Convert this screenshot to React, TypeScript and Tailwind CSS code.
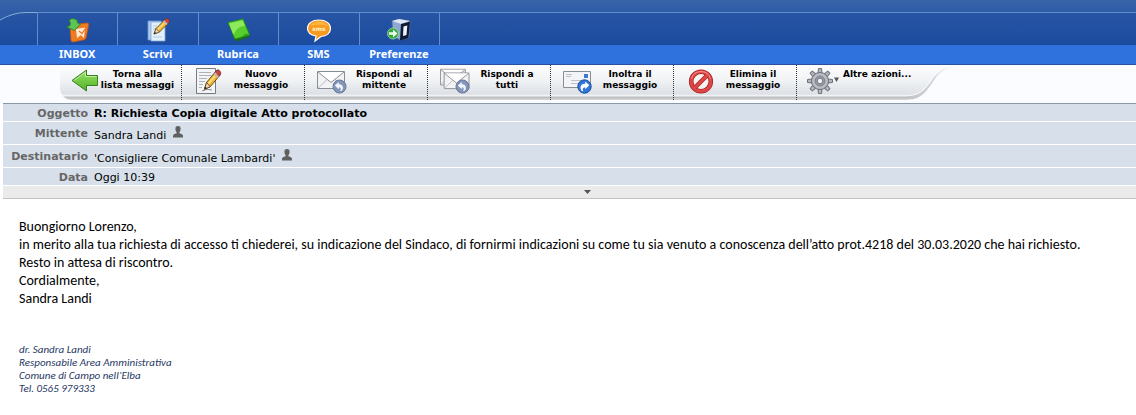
import React from "react";

function InboxIcon() {
  return (
    <svg width="26" height="26" viewBox="0 0 26 26" aria-hidden="true">
      <path d="M5 8 L22 6 Q24 6 23.600 8 L21 21 Q20.500 23 18 23 L8 25 Q6 25 6 23 Z" fill="#f07a1e" stroke="#c65a10" strokeWidth=".8" />
      <path d="M11 12 L20 10.500 L19 21 L16 18 L12 21 Z" fill="#fdebd8" />
      <path d="M14 14 L17 16.500 L20 12" fill="none" stroke="#e9772a" strokeWidth="1.200" />
      <path d="M4 3.500 Q6 .5 10 2 Q13 3 12.500 6 L15.500 7 L9.500 13.500 L1.500 10 L5 8.500 Q6 5 4 3.500 Z" fill="#5cc452" stroke="#237c2c" strokeWidth=".8" />
    </svg>
  );
}

function Pencil() {
  return (
    <g>
      <path d="M9 17 L11 11.500 L20.500 2 L24 5.500 L14.500 15 Z" fill="#f2b632" stroke="#5a3d16" strokeWidth=".8" />
      <path d="M19 3.500 L20.500 2 Q22 .6 23.600 2.300 Q25.400 4 24 5.500 L22.500 7 Z" fill="#cf4640" stroke="#6b2b2b" strokeWidth=".7" />
      <path d="M18 4.500 L19.300 3.300 L22.700 6.700 L21.500 8 Z" fill="#b8bcc4" />
      <path d="M12 12.200 L18.600 5.700 L19.700 6.800 L13 13.300 Z" fill="#ffdf85" />
      <path d="M11 11.500 L14.500 15 L9 17 Z" fill="#ecd9b5" stroke="#5a3d16" strokeWidth=".7" />
      <path d="M9 17 L9.800 14.800 L11.200 16.200 Z" fill="#222" />
    </g>
  );
}

function WriteIcon() {
  return (
    <svg width="26" height="26" viewBox="0 0 26 26" aria-hidden="true">
      <path d="M3 4 H16 V23 H3 Z" fill="#aecdf0" stroke="#6d99cf" strokeWidth=".8" />
      <path d="M6 5 H20 V24 H6 Z" fill="#e3effb" stroke="#7da7d9" strokeWidth=".8" />
      <path d="M8 9 H12 M8 12 H11 M8 20 H17" stroke="#b2c9e6" />
      <Pencil />
    </svg>
  );
}

function BookIcon() {
  return (
    <svg width="26" height="26" viewBox="0 0 26 26" aria-hidden="true">
      <path d="M3 6 L8 22 L11 24.500 L24 19.500 L18 4 Z" fill="#176c19" />
      <path d="M2 5.500 L17 2 L23.500 18 L9 22 Z" fill="#58ce2c" stroke="#269119" strokeWidth=".8" />
      <path d="M3 6.500 L16.500 3.200 L19 9 Q11 9 7.500 18 Z" fill="#8ee95c" />
      <path d="M15 20 L20 16.500 L23.500 18 Z" fill="#2c9e1c" />
    </svg>
  );
}

function SmsIcon() {
  return (
    <svg width="26" height="26" viewBox="0 0 26 26" aria-hidden="true">
      <path d="M13 3 C20 3 24.500 6.500 24.500 11.500 C24.500 16 20.500 19 15 19.500 L9 24 L10 19 C5 18 1.500 15.500 1.500 11.500 C1.500 6.500 6 3 13 3 Z" fill="#f79a1f" stroke="#fff" strokeWidth="1.200" />
      <path d="M4 9 Q7 4.500 13 4.500 Q19 4.500 22 9 Q13 6.500 4 9 Z" fill="#ffb542" />
      <text x="13" y="13.500" textAnchor="middle" fontFamily="DejaVu Sans, sans-serif" fontWeight="700" fontSize="6" fill="#fff3cf">sms</text>
    </svg>
  );
}

function PrefsIcon() {
  return (
    <svg width="26" height="26" viewBox="0 0 26 26" aria-hidden="true">
      <path d="M6 4 L13 2 L24 4 L23 21 L14 23 L7 19 Z" fill="#8fa9d3" stroke="#53688f" strokeWidth=".7" />
      <path d="M6 4 L13 2 L24 4 L15.500 7 Z" fill="#dce8f8" />
      <path d="M15 7 L24 4.500 L22.500 21 L14 23.500 Z" fill="#101c35" />
      <path d="M17.500 9.500 L21.300 8.500 L20.500 18 L17 19 Z" fill="#edf4fc" />
      <circle cx="7" cy="16.500" r="5.500" fill="#35a746" stroke="#a4dca8" strokeWidth=".8" />
      <path d="M3 15.200 H7 V12.500 L11.500 16.500 L7 20.500 V17.800 H3 Z" fill="#e9ffe6" />
    </svg>
  );
}

function BackIcon() {
  return (
    <svg width="30" height="28" viewBox="0 0 30 28" aria-hidden="true">
      <defs>
        <linearGradient id="back" x1="0" y1="0" x2="0" y2="1">
          <stop offset="0" stopColor="#9be36a" />
          <stop offset="1" stopColor="#4fb222" />
        </linearGradient>
      </defs>
      <path d="M2 13.500 L16.500 3 V8.500 H27.500 V18.500 H16.500 V24 Z" fill="url(#back)" stroke="#3b7d22" strokeLinejoin="round" />
      <path d="M4 13.500 L15.500 5.200 V9.500 H26.500" fill="none" stroke="#c8f5a8" strokeWidth=".8" />
    </svg>
  );
}

function NewIcon() {
  return (
    <svg width="30" height="28" viewBox="0 0 30 28" aria-hidden="true">
      <path d="M2.500 1.500 H21.500 V26.500 H2.500 Z" fill="#f3f4f6" stroke="#777b84" />
      <path d="M5 5.500 H17 M5 8.500 H17 M5 11.500 H13 M5 14.500 H11 M5 17.500 H9 M5 20.500 H8" stroke="#adb0b7" />
      <path d="M8 24 Q13 21 18 23" fill="none" stroke="#8a8a8a" />
      <g transform="translate(1 1) scale(1.050 1.250)">
        <Pencil />
      </g>
    </svg>
  );
}

function Envelope({ x, y }: { x: number; y: number }) {
  return (
    <g transform={`translate(${x} ${y})`}>
      <path d="M.5 .5 H27.500 V17.500 H.5 Z" fill="#f3f3f5" stroke="#8b8d94" />
      <path d="M1 17 L10 8.500 M27 17 L18 8.500" stroke="#b9bac0" />
      <path d="M1 1 L14 11.500 L27 1" fill="#fff" stroke="#8b8d94" />
    </g>
  );
}

function ReplyBadge() {
  return (
    <g>
      <circle cx="22.500" cy="19.500" r="6.500" fill="#8496b8" stroke="#64769c" />
      <path d="M17.800 18.500 L21.800 15 V17.200 Q26.500 17.200 25.800 22 Q25 24.300 23 24.300 Q25 20.500 21.800 20.200 V22.200 Z" fill="#f2f6fc" />
    </g>
  );
}

function ReplyIcon() {
  return (
    <svg width="30" height="28" viewBox="0 0 30 28" aria-hidden="true">
      <Envelope x={0} y={4} />
      <ReplyBadge />
    </svg>
  );
}

function ReplyAllIcon() {
  return (
    <svg width="30" height="28" viewBox="0 0 30 28" aria-hidden="true">
      <g transform="scale(.92)">
        <Envelope x={0} y={2} />
        <Envelope x={4} y={6} />
      </g>
      <ReplyBadge />
    </svg>
  );
}

function ForwardIcon() {
  return (
    <svg width="30" height="28" viewBox="0 0 30 28" aria-hidden="true">
      <path d="M.5 4.500 H27.500 V20.500 H.5 Z" fill="#f3f4f7" stroke="#8b8d94" />
      <path d="M3 7.500 H9 M3 9.500 H8 M8 13.500 H18 M8 16.500 H16" stroke="#bfc1c6" />
      <path d="M21 7 H25 V11 H21 Z" fill="#3c7ad2" />
      <circle cx="21.500" cy="19.500" r="6.700" fill="#2e76d8" stroke="#1d4f9e" />
      <path d="M26.300 18.300 L22.200 14.500 V16.800 Q17 17 17.500 21.500 Q18 24 20 24.500 Q18.800 20.500 22.200 20.200 V22.200 Z" fill="#fff" />
    </svg>
  );
}

function DeleteIcon() {
  return (
    <svg width="30" height="28" viewBox="0 0 30 28" aria-hidden="true">
      <circle cx="15" cy="14.500" r="9.800" fill="#f5f5f5" stroke="#a82020" strokeWidth="4.600" />
      <circle cx="15" cy="14.500" r="9.800" fill="none" stroke="#de4646" strokeWidth="3" />
      <path d="M9 20.500 L21 8.500" stroke="#b52626" strokeWidth="4.400" />
      <path d="M8 21.500 L22 7.500" stroke="#de4646" strokeWidth="3" />
      <path d="M5.500 11.500 A10 10 0 0 1 24.500 11.500" fill="none" stroke="#f5a09a" strokeWidth=".9" />
    </svg>
  );
}

function GearIcon() {
  const teeth = [0, 45, 90, 135, 180, 225, 270, 315];
  return (
    <svg width="32" height="28" viewBox="0 0 32 28" aria-hidden="true">
      {teeth.map((a) => (
        <path key={a} d="M11 6 L11.500 1.500 H14.500 L15 6" transform={`rotate(${a} 13 14)`} fill="#b4b7bd" stroke="#6c7078" />
      ))}
      <circle cx="13" cy="14" r="8.500" fill="#b4b7bd" stroke="#6c7078" />
      <circle cx="13" cy="14" r="7.500" fill="#bcbfc5" />
      <circle cx="13" cy="14" r="5" fill="#9a9ea6" stroke="#7d8189" />
      <circle cx="13" cy="14" r="2.800" fill="#f2f3f5" stroke="#70747c" />
      <path d="M27 10.500 H32 L29.500 15 Z" fill="#555" />
    </svg>
  );
}

function PersonIcon() {
  return (
    <svg className="mt-0.5" width="10" height="12" viewBox="0 0 10 12" aria-hidden="true">
      <path d="M5 0 Q7.800 0 7.600 3 Q7.400 5.300 6.400 6.200 V7.300 Q9.800 8 10 10 V11.500 H0 V10 Q.2 8 3.600 7.300 V6.200 Q2.600 5.300 2.400 3 Q2.200 0 5 0 Z" fill="#606060" />
    </svg>
  );
}

const tabs = [
  { label: "INBOX", icon: <InboxIcon /> },
  { label: "Scrivi", icon: <WriteIcon /> },
  { label: "Rubrica", icon: <BookIcon /> },
  { label: "SMS", icon: <SmsIcon /> },
  { label: "Preferenze", icon: <PrefsIcon /> },
];

const actions = [
  { lines: ["Torna alla", "lista messaggi"], icon: <BackIcon /> },
  { lines: ["Nuovo", "messaggio"], icon: <NewIcon /> },
  { lines: ["Rispondi al", "mittente"], icon: <ReplyIcon /> },
  { lines: ["Rispondi a", "tutti"], icon: <ReplyAllIcon /> },
  { lines: ["Inoltra il", "messaggio"], icon: <ForwardIcon /> },
  { lines: ["Elimina il", "messaggio"], icon: <DeleteIcon /> },
];

const fields = [
  { name: "Oggetto", value: "R: Richiesta Copia digitale Atto protocollato", strong: true, person: false },
  { name: "Mittente", value: "Sandra Landi", strong: false, person: true },
  { name: "Destinatario", value: "'Consigliere Comunale Lambardi'", strong: false, person: true },
  { name: "Data", value: "Oggi 10:39", strong: false, person: false },
];

function Header() {
  return (
    <header className="border-b border-[#2a4f9c] bg-[#2f72de]">
      <div className="h-3 bg-linear-to-b from-[#3763a8] to-[#2f5ca6]" />
      <nav className="flex bg-[linear-gradient(to_bottom,#2855a4_0px,#1c4b9f_33px,#2f72de_33px)]">
        <svg className="h-[33px] w-[37px] shrink-0" viewBox="0 0 37 33" aria-hidden="true">
          <path d="M0 0 H26 Q13 1 0 8 Z" fill="#2f5ca6" />
          <path d="M0 8 Q13 .5 26 .5 H37" fill="none" stroke="#86add9" />
        </svg>
        <div className="flex w-[402px] shrink-0">
          {tabs.map((tab) => (
            <a key={tab.label} href="#" className="flex flex-1 basis-0 flex-col text-center font-['Noto_Sans',sans-serif] text-[11px] leading-[17px] font-bold text-white">
              <span className="flex h-[33px] items-center justify-center border-t border-l border-[#5f8fcd] pt-0.5">{tab.icon}</span>
              <span className="pb-0.5 whitespace-nowrap">{tab.label}</span>
            </a>
          ))}
        </div>
        <div className="h-[33px] flex-1 border-t border-l border-[#5f8fcd]" />
      </nav>
    </header>
  );
}

function Toolbar() {
  return (
    <div className="flex h-[38px] bg-[#fafcff] pl-[60px]" role="toolbar">
      <div className="flex h-[35px] rounded-bl-xl bg-[linear-gradient(to_bottom,#fdfdfe_0px,#f0f2f4_16px,#dce1e6_29px,#f6f7f8_31px,#b9babd_32px,#d9dadc_35px)]">
        {actions.map((action) => (
          <button key={action.lines[1] + action.lines[0]} type="button" className="flex w-[123px] items-start border-r border-dotted border-[#333] pr-1.5 pl-3 text-[9px] leading-[11px] font-bold text-black first:w-[122px] first:pl-2.5">
            <span className="mt-0.5 shrink-0">{action.icon}</span>
            <span className="mt-1 flex-1 text-center whitespace-nowrap">
              {action.lines[0]}
              <br />
              {action.lines[1]}
            </span>
          </button>
        ))}
        <button type="button" className="flex w-[111px] items-start pl-[10px] text-[9px] leading-[11px] font-bold text-black">
          <span className="mt-0.5 shrink-0">
            <GearIcon />
          </span>
          <span className="z-10 mt-1 ml-1 whitespace-nowrap">Altre azioni...</span>
        </button>
      </div>
      <svg className="h-[35px] w-[52px] shrink-0" viewBox="0 0 52 35" aria-hidden="true">
        <defs>
          <linearGradient id="tray" x1="0" y1="0" x2="0" y2="1">
            <stop offset="0" stopColor="#fdfdfe" />
            <stop offset=".5" stopColor="#f0f2f4" />
            <stop offset="1" stopColor="#dce1e6" />
          </linearGradient>
          <linearGradient id="shade" gradientUnits="userSpaceOnUse" x1="0" y1="33" x2="44" y2="0">
            <stop offset="0" stopColor="#c4c5c8" />
            <stop offset=".6" stopColor="#d6d8db" />
            <stop offset="1" stopColor="#fafcff" />
          </linearGradient>
        </defs>
        <path d="M0 0 H48 Q37 3 30 10 C21 21 17 34.500 0 34.500 Z" fill="url(#shade)" />
        <path d="M0 0 H44 Q35 2 28 9 C20 18 16 30.500 0 30.500 Z" fill="url(#tray)" />
        <path d="M44 0 Q35 2 28 9 C20 18 16 30.500 0 30.500" fill="none" stroke="#fff" />
      </svg>
    </div>
  );
}

function Details() {
  return (
    <section className="ml-[3px] border-t border-[#8997a8]">
      <table className="w-full border-collapse text-[11px] leading-[14px]">
        <tbody>
          {fields.map((field) => (
            <tr key={field.name} className="border-b border-white bg-[#d7e0ea]">
              <th scope="row" className={field.person ? "w-[88px] pt-[5px] pr-[3px] text-right align-top font-bold text-[#666]" : "w-[88px] pt-[3px] pr-[3px] text-right align-top font-bold text-[#666]"}>{field.name}</th>
              <td className={field.strong ? "pt-0.5 pl-[3px] font-bold" : "pt-0.5 pl-[3px]"}>
                {field.person ? (
                  <span className="flex h-5 items-start gap-[7px]">
                    <span className="pt-[5px]">{field.value}</span>
                    <PersonIcon />
                  </span>
                ) : (
                  <span className="flex h-[15px] items-center">{field.value}</span>
                )}
              </td>
            </tr>
          ))}
        </tbody>
      </table>
      <button type="button" aria-label="Mostra dettagli" className="flex h-[13px] w-full items-center justify-center border-b border-[#c4c4c4] bg-[#eaeaea] pl-9">
        <svg width="7" height="4" viewBox="0 0 7 4" aria-hidden="true">
          <path d="M0 0 H7 L3.500 4 Z" fill="#555" />
        </svg>
      </button>
    </section>
  );
}

export default function App() {
  return (
    <div className="bg-white font-['DejaVu_Sans',sans-serif] text-black">
      <Header />
      <Toolbar />
      <Details />
      <main className="pt-[19px] pl-[19px] font-[Carlito,Lato,sans-serif]">
        <div className="text-[14px] leading-[18px]">
          <p>Buongiorno Lorenzo,</p>
          <p>in merito alla tua richiesta di accesso ti chiederei, su indicazione del Sindaco, di fornirmi indicazioni su come tu sia venuto a conoscenza dell’atto prot.4218 del 30.03.2020 che hai richiesto.</p>
          <p>Resto in attesa di riscontro.</p>
          <p>Cordialmente,</p>
          <p>Sandra Landi</p>
        </div>
        <address className="pt-[35px] text-[11px] leading-[13px] text-[#1f3864] italic">
          <p>dr. Sandra Landi</p>
          <p>Responsabile Area Amministrativa</p>
          <p>Comune di Campo nell’Elba</p>
          <p>Tel. 0565 979333</p>
        </address>
      </main>
    </div>
  );
}
